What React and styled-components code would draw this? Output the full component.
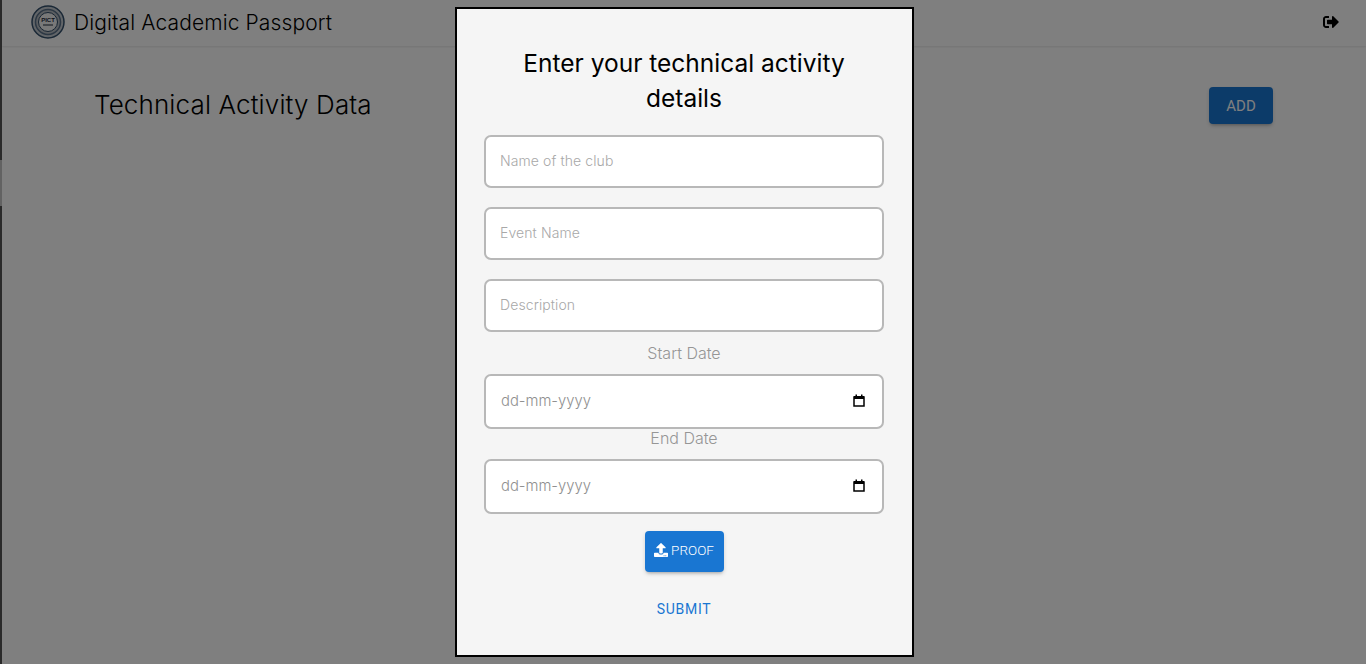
import { createGlobalStyle } from "styled-components"
import styled from "styled-components"
import { FaSignOutAlt, FaUpload } from "react-icons/fa"

const GlobalStyle = createGlobalStyle`
  html, body {
    margin: 0;
    height: 100%;
    overflow: hidden;
    background: #fff;
    font-family: "Inter", "Liberation Sans", sans-serif;
  }
  * {
    box-sizing: border-box;
  }
`

const Page = styled.div`
  display: flex;
  height: 100vh;
`

const EdgeStrip = styled.div`
  width: 2px;
  flex-shrink: 0;
  background: #555;
  padding-top: 160px;
`

const EdgeThumb = styled.div`
  height: 46px;
  background: #c4c4c4;
`

const Main = styled.main`
  flex: 1;
  min-width: 0;
`

const Header = styled.header`
  display: flex;
  align-items: center;
  height: 46px;
  padding: 0 27px 2px 29px;
  box-shadow: 0 1px 2px rgba(0, 0, 0, 0.1);
`

const Brand = styled.div`
  display: flex;
  align-items: center;
  gap: 9px;
  flex: 1;
`

const BrandName = styled.span`
  font-size: 21px;
  font-weight: 300;
  letter-spacing: 0.12px;
  color: #000;
`

const LogoutButton = styled.button`
  display: flex;
  padding: 0;
  border: none;
  background: none;
  color: #000;
  font-size: 16px;
`

const Content = styled.section`
  display: flex;
  align-items: center;
  justify-content: space-between;
  padding: 41px 93px 0 92px;
`

const PageTitle = styled.h1`
  margin: 0 0 3px;
  font-size: 26px;
  font-weight: 300;
  letter-spacing: 0.13px;
  color: #000;
`

const AddButton = styled.button`
  width: 64px;
  height: 37px;
  border: none;
  border-radius: 4px;
  background: #1976d2;
  color: #fff;
  font-family: "Roboto", sans-serif;
  font-size: 15px;
  box-shadow: 0 3px 3px -2px rgba(0, 0, 0, 0.2), 0 2px 4px rgba(0, 0, 0, 0.14);
`

const Overlay = styled.div`
  position: fixed;
  inset: 0;
  display: flex;
  align-items: center;
  justify-content: center;
  padding-left: 3px;
  background: rgba(0, 0, 0, 0.5);
`

const Modal = styled.div`
  width: 459px;
  height: 650px;
  padding: 37px 28px 0 27px;
  background: #f5f5f5;
  border: 2px solid #000;
`

const ModalTitle = styled.h2`
  margin: 0 0 19px;
  font-size: 24.5px;
  line-height: 35px;
  font-weight: 400;
  text-align: center;
  color: #000;
`

const Form = styled.form`
  display: flex;
  flex-direction: column;
  align-items: center;
`

const TextInput = styled.input`
  width: 400px;
  height: 53px;
  margin-bottom: ${(p) => p.$gap}px;
  padding: 0 14px 2px;
  border: 2px solid #b8b8b8;
  border-radius: 7px;
  background: #fff;
  font-family: inherit;
  font-size: 14px;
  font-weight: 300;
  letter-spacing: 0.1px;

  &::placeholder {
    color: #a8a8a8;
    opacity: 1;
  }
`

const DateLabel = styled.label`
  height: 18px;
  margin-bottom: 12px;
  font-size: 16px;
  line-height: 18px;
  font-weight: 300;
  color: #969696;
`

const DateField = styled.div`
  display: flex;
  align-items: center;
  justify-content: space-between;
  width: 400px;
  height: 55px;
  padding: 0 17px 2px 15px;
  border: 2px solid #b8b8b8;
  border-radius: 7px;
  background: #fff;
  color: #000;
`

const DatePlaceholder = styled.span`
  font-size: 14.8px;
  font-weight: 300;
  color: #909090;
`

const ProofButton = styled.button`
  display: flex;
  align-items: center;
  justify-content: center;
  gap: 3px;
  width: 79px;
  height: 41px;
  margin-top: 17px;
  padding: 0 0 3px;
  border: none;
  border-radius: 4px;
  background: #1976d2;
  color: #fff;
  font-family: "Roboto", sans-serif;
  font-size: 13.5px;
  font-weight: 300;
  box-shadow: 0 3px 3px -2px rgba(0, 0, 0, 0.2), 0 2px 4px rgba(0, 0, 0, 0.14);
`

const SubmitButton = styled.button`
  margin-top: 27px;
  padding: 0;
  border: none;
  background: none;
  color: #1976d2;
  font-family: "Roboto", sans-serif;
  font-size: 14px;
  line-height: 20px;
  letter-spacing: 0.7px;
`

function Logo() {
  return (
    <svg width="34" height="34" viewBox="0 0 34 34">
      <circle cx="17" cy="17" r="16" fill="#c4cad0" stroke="#34506c" strokeWidth="1.5" />
      <circle cx="17" cy="17" r="12.500" fill="#b6bcc2" stroke="#5a7088" strokeWidth="1.5" />
      <circle cx="17" cy="17" r="9.500" fill="#f0f0f0" stroke="#2f4a66" />
      <text x="17" y="17" textAnchor="middle" fontSize="6" fontWeight="700" fontFamily="Liberation Sans" fill="#1c2a3a">
        PICT
      </text>
      <path d="M12 20h10" stroke="#1c2a3a" strokeWidth="1" />
    </svg>
  )
}

function CalendarIcon() {
  return (
    <svg width="12" height="13" viewBox="0 0 12 13">
      <path fill="none" stroke="#000" strokeWidth="1.5" d="M1 3h10v9H1z" />
      <path fill="#000" d="M1 2h10v3H1zM2.500 0.500h1.500v2H2.500zM8 0.500h1.500v2H8z" />
    </svg>
  )
}

const textFields = ["Name of the club", "Event Name", "Description"]

export default function App() {
  return (
    <Page>
      <GlobalStyle />
      <EdgeStrip>
        <EdgeThumb />
      </EdgeStrip>
      <Main>
        <Header>
          <Brand>
            <Logo />
            <BrandName>Digital Academic Passport</BrandName>
          </Brand>
          <LogoutButton>
            <FaSignOutAlt />
          </LogoutButton>
        </Header>
        <Content>
          <PageTitle>Technical Activity Data</PageTitle>
          <AddButton>ADD</AddButton>
        </Content>
      </Main>
      <Overlay>
        <Modal>
          <ModalTitle>
            Enter your technical activity
            <br />
            details
          </ModalTitle>
          <Form>
            {textFields.map((name, i) => (
              <TextInput key={name} placeholder={name} $gap={i === 2 ? 12 : 19} />
            ))}
            <DateLabel>Start Date</DateLabel>
            <DateField>
              <DatePlaceholder>dd-mm-yyyy</DatePlaceholder>
              <CalendarIcon />
            </DateField>
            <DateLabel>End Date</DateLabel>
            <DateField>
              <DatePlaceholder>dd-mm-yyyy</DatePlaceholder>
              <CalendarIcon />
            </DateField>
            <ProofButton type="button">
              <FaUpload size={14} />
              PROOF
            </ProofButton>
            <SubmitButton type="button">SUBMIT</SubmitButton>
          </Form>
        </Modal>
      </Overlay>
    </Page>
  )
}
